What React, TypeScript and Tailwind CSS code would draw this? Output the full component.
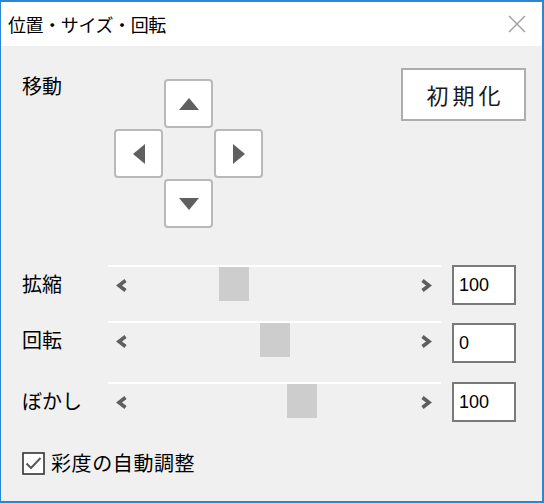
import type React from 'react'

const font = { fontFamily: '"Noto Sans CJK JP", "Noto Sans", sans-serif' }

function Triangle({ dir }: { dir: 'up' | 'down' | 'left' | 'right' }): React.JSX.Element {
  const points = {
    up: '0,13 10,1 20,13',
    down: '0,1 10,13 20,1',
    left: '13,0 1,10 13,20',
    right: '1,0 13,10 1,20'
  }[dir]
  const vertical = dir === 'up' || dir === 'down'
  return (
    <svg width={vertical ? 20 : 14} height={vertical ? 14 : 20} viewBox={vertical ? '0 0 20 14' : '0 0 14 20'}>
      <polygon points={points} fill="#606060" />
    </svg>
  )
}

function PadButton({ dir }: { dir: 'up' | 'down' | 'left' | 'right' }): React.JSX.Element {
  return (
    <button
      type="button"
      className="flex h-[49px] w-[49px] items-center justify-center rounded-[4px] border-2 border-[#b9b9b9] bg-white"
    >
      <Triangle dir={dir} />
    </button>
  )
}

function Chevron({ right }: { right?: boolean }): React.JSX.Element {
  return (
    <svg width="12" height="13" viewBox="0 0 12 13" className="shrink-0">
      <polyline
        points={right ? '2.5,1.5 9,6.5 2.5,11.5' : '9.5,1.5 3,6.5 9.5,11.5'}
        fill="none"
        stroke="#5f5f5f"
        strokeWidth="3.6"
      />
    </svg>
  )
}

interface SliderRowProps {
  label: string
  value: string
  thumb: number
  inputOffset?: boolean
  className?: string
}

function SliderRow({ label, value, thumb, inputOffset, className }: SliderRowProps): React.JSX.Element {
  return (
    <div className={`flex items-start pl-[21px] ${className ?? ''}`}>
      <div className="flex h-[38px] w-[86px] items-center text-[20px] text-black">{label}</div>
      <div className="relative flex h-[38px] w-[333px] items-center justify-between border-t-2 border-white pl-[8px] pr-[9px]">
        <Chevron />
        <div
          className="absolute top-0 h-[34px] w-[30px] bg-[#cdcdcd]"
          style={{ left: thumb }}
        />
        <Chevron right />
      </div>
      <div
        className={`ml-[11px] flex h-[40px] w-[64px] items-center border-2 border-[#7a7a7a] bg-white pl-[5px] text-[18px] text-black ${
          inputOffset ? 'mt-[2px]' : ''
        }`}
        style={{ fontFamily: '"Liberation Sans", Arial, sans-serif' }}
      >
        {value}
      </div>
    </div>
  )
}

export default function App(): React.JSX.Element {
  return (
    <div
      className="flex h-[503px] w-[544px] flex-col border-2 border-l border-[#2b86d8] bg-[#f0f0f0]"
      style={font}
    >
      <div className="flex h-[44px] shrink-0 items-center justify-between bg-white pl-[7px] pr-[16px]">
        <span className="text-[18px] tracking-[-0.4px] text-black">位置・サイズ・回転</span>
        <svg width="18" height="18" viewBox="0 0 18 18">
          <path d="M1 1 L17 17 M17 1 L1 17" stroke="#9a9a9a" strokeWidth="1.2" />
        </svg>
      </div>

      <div className="flex items-start pl-[21px] pr-[16px] pt-[22px]">
        <div className="mt-[3px] w-[92px] text-[20px] leading-[30px] text-black">移動</div>
        <div className="mt-[11px] grid grid-cols-[49px_49px_49px] gap-[1px]">
          <div />
          <PadButton dir="up" />
          <div />
          <PadButton dir="left" />
          <div />
          <PadButton dir="right" />
          <div />
          <PadButton dir="down" />
          <div />
        </div>
        <div className="flex-1" />
        <button
          type="button"
          className="flex h-[53px] w-[125px] items-center justify-center border-2 border-[#adadad] bg-white pl-[4px] text-[22px] tracking-[4px] text-[#1a1a1a]"
        >
          初期化
        </button>
      </div>

      <SliderRow label="拡縮" value="100" thumb={111} className="mt-[37px]" />
      <SliderRow label="回転" value="0" thumb={152} inputOffset className="mt-[16px]" />
      <SliderRow label="ぼかし" value="100" thumb={179} className="mt-[19px]" />

      <div className="mt-[26px] flex items-center gap-[6px] pl-[21px]">
        <svg width="23" height="23" viewBox="0 0 23 23">
          <rect x="1" y="1" width="21" height="21" fill="#ffffff" stroke="#333333" strokeWidth="1.6" />
          <polyline points="4.5,11.5 9,16 18.5,6" fill="none" stroke="#5a5a5a" strokeWidth="2" />
        </svg>
        <span className="text-[20px] tracking-[0.6px] text-black">彩度の自動調整</span>
      </div>
    </div>
  )
}
